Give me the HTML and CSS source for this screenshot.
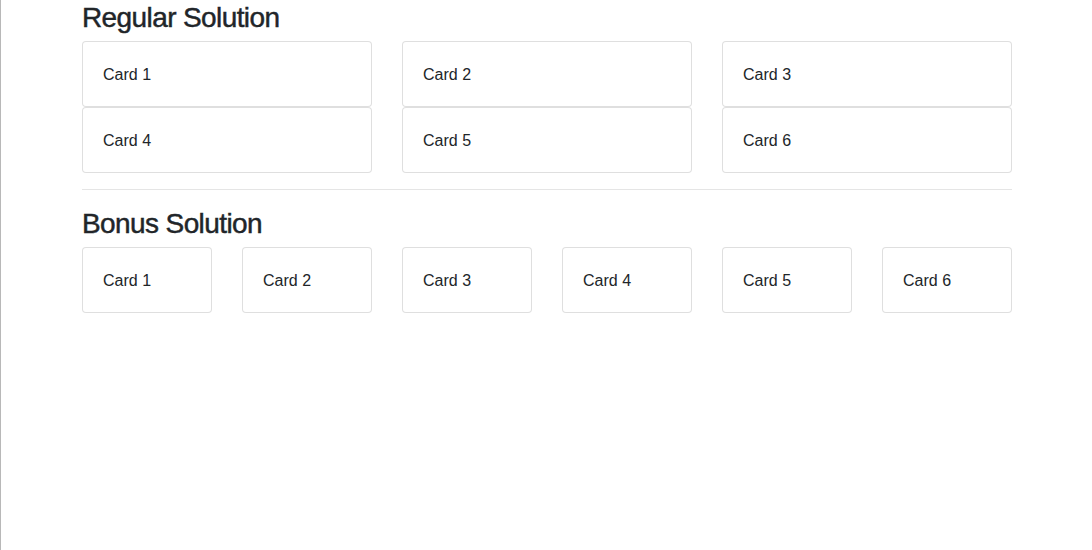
FILE: index.html
```html
<!DOCTYPE html>
<html lang="en">
<head>
<meta charset="utf-8">
<title>Cards</title>
<link rel="stylesheet" href="styles.css">
</head>
<body>
<div class="container">
  <h3 class="title">Regular Solution</h3>
  <div class="grid grid-3">
    <div class="card">Card 1</div>
    <div class="card">Card 2</div>
    <div class="card">Card 3</div>
    <div class="card">Card 4</div>
    <div class="card">Card 5</div>
    <div class="card">Card 6</div>
  </div>
  <hr class="divider">
  <h3 class="title">Bonus Solution</h3>
  <div class="grid grid-6">
    <div class="card">Card 1</div>
    <div class="card">Card 2</div>
    <div class="card">Card 3</div>
    <div class="card">Card 4</div>
    <div class="card">Card 5</div>
    <div class="card">Card 6</div>
  </div>
</div>
</body>
</html>
```
FILE: styles.css
```css
html, body {
  height: 100%;
}
body {
  margin: 0;
  box-sizing: border-box;
  border-left: 1px solid #b8b8b8;
  background: #fff;
  color: #212529;
  font-family: "Liberation Sans", Arial, sans-serif;
  font-size: 16px;
  line-height: 24px;
}
.container {
  width: 930px;
  margin-left: 81px;
}
.title {
  margin: 0 0 7px;
  padding-top: 1px;
  font-size: 28px;
  line-height: 33px;
  font-weight: 500;
  letter-spacing: -0.6px;
  color: #212529;
  -webkit-text-stroke: 0.45px #212529;
}
.grid {
  display: grid;
  column-gap: 30px;
}
.grid-3 {
  grid-template-columns: repeat(3, 1fr);
}
.grid-6 {
  grid-template-columns: repeat(6, 1fr);
}
.card {
  border: 1px solid rgba(0, 0, 0, 0.125);
  border-radius: 4px;
  padding: 21px 20px 19px;
  background: #fff;
}
.divider {
  margin: 16px 0;
  border: 0;
  border-top: 1px solid rgba(0, 0, 0, 0.1);
  height: 0;
}
```
